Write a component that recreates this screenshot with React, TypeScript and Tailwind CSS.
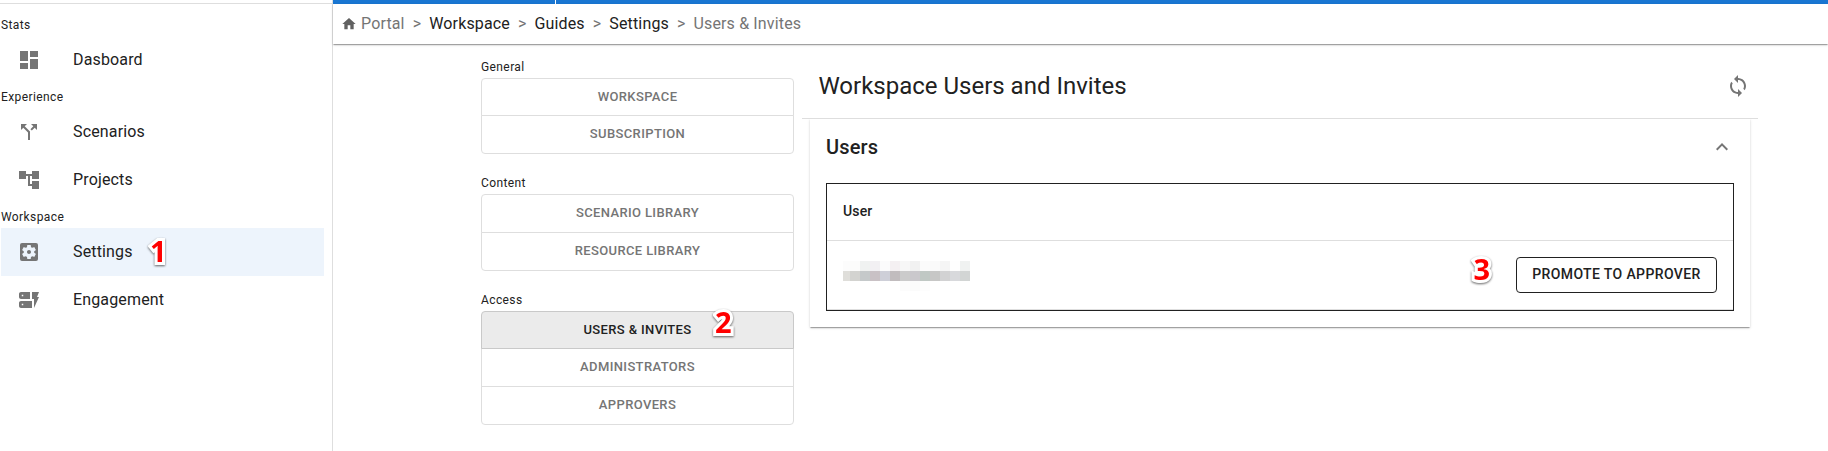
import type { ReactNode } from "react";
import {
  MdDashboard,
  MdCallSplit,
  MdAccountTree,
  MdSettingsApplications,
  MdDynamicForm,
  MdHome,
  MdLoop,
  MdExpandLess,
} from "react-icons/md";

const elevation =
  "shadow-[0_2px_1px_-1px_rgba(0,0,0,0.2),0_1px_1px_0_rgba(0,0,0,0.14),0_1px_3px_0_rgba(0,0,0,0.12)]";

function Marker({ n, className }: { n: number; className: string }) {
  return (
    <span
      className={`absolute font-['Open_Sans',sans-serif] text-[29px] leading-[30px] font-bold text-[#ff0000] [paint-order:stroke_fill] [-webkit-text-stroke:6px_white] [stroke-linejoin:round] drop-shadow-[0_1px_1px_rgba(0,0,0,0.6)] ${className}`}
    >
      {n}
    </span>
  );
}

function NavCaption({ children }: { children: ReactNode }) {
  return (
    <div className="h-6 pl-px pt-[3px] text-[12px] leading-5 tracking-[0.4px]">{children}</div>
  );
}

function NavItem({
  icon,
  label,
  active = false,
  children,
}: {
  icon: ReactNode;
  label: string;
  active?: boolean;
  children?: ReactNode;
}) {
  return (
    <div
      className={`relative ml-px flex h-12 w-[323px] items-center pl-4 ${active ? "bg-[#edf4fc]" : ""}`}
    >
      <span className="w-14 text-2xl text-[#757575]">{icon}</span>
      <span className="text-base tracking-[0.15px]">{label}</span>
      {children}
    </div>
  );
}

function ToggleGroup({
  title,
  items,
  selected,
  children,
}: {
  title: string;
  items: string[];
  selected?: string;
  children?: ReactNode;
}) {
  return (
    <div className="relative mb-[20.1px]">
      <div className="h-5 text-[12px] leading-[18px] tracking-[0.4px]">{title}</div>
      <div className="flex flex-col">
        {items.map((item) => (
          <div
            key={item}
            className={`-mt-px flex h-[38.7px] items-center justify-center border pb-[1.4px] text-[13px] font-medium tracking-[0.37px] uppercase first:mt-0 first:rounded-t last:rounded-b ${
              item === selected
                ? "relative border-[#c9c9c9] bg-[#ebebeb] text-[#212121]"
                : "border-[#dedede] text-[#757575]"
            }`}
          >
            {item}
          </div>
        ))}
      </div>
      {children}
    </div>
  );
}

const mosaicTop = ["bg-[#fcfcfc]", "bg-[#fcfcfb]", "bg-[#f0f2f1]", "bg-[#f2f0f3]", "bg-[#fbfbfc]", "bg-[#f4f0f2]", "bg-[#f7f7f7]", "bg-[#f1f1f1]", "bg-[#fbfbfb]", "bg-[#fafafa]", "bg-[#f5f5f5]", "bg-[#fefefe]", "bg-[#f0f2f1]"];
const mosaicMid = ["bg-[#dfdeda]", "bg-[#d3d3d0]", "bg-[#c5c9ca]", "bg-[#c9c1c5]", "bg-[#cecfd8]", "bg-[#c1bcbe]", "bg-[#cbcbcb]", "bg-[#cac8cc]", "bg-[#c0c8c4]", "bg-[#c7c7c6]", "bg-[#d2d2d3]", "bg-[#d8d9dc]", "bg-[#d2d5d4]"];
const mosaicLow = ["", "", "", "", "", "", "bg-[#fcfcfc]", "bg-[#fbfbfb]", "bg-[#fdfdfd]", "", "", "", ""];

function RedactedName() {
  return (
    <div className="-mb-[2px] w-[127px]">
      {[mosaicTop, mosaicMid, mosaicLow].map((row, r) => (
        <div key={r} className="flex h-2.5">
          {row.map((c, i) => (
            <span key={i} className={`${i === 0 ? "w-[7px]" : "w-2.5"} ${c}`} />
          ))}
        </div>
      ))}
    </div>
  );
}

function Sep() {
  return <span className="mx-2 text-[#757575]">&gt;</span>;
}

export default function App() {
  return (
    <div className="flex h-[451px] w-[1828px] overflow-hidden bg-white font-[Roboto,sans-serif] text-[#212121]">
      <aside className="w-[333px] shrink-0 border-r border-[#dedede]">
        <div className="h-1 border-b border-[#dedede]" />
        <nav className="pt-2">
          <NavCaption>Stats</NavCaption>
          <NavItem icon={<MdDashboard />} label="Dasboard" />
          <NavCaption>Experience</NavCaption>
          <NavItem icon={<MdCallSplit />} label="Scenarios" />
          <NavItem icon={<MdAccountTree />} label="Projects" />
          <NavCaption>Workspace</NavCaption>
          <NavItem icon={<MdSettingsApplications />} label="Settings" active>
            <Marker n={1} className="left-[149px] top-[8px]" />
          </NavItem>
          <NavItem icon={<MdDynamicForm />} label="Engagement" />
        </nav>
      </aside>

      <main className="min-w-0 flex-1">
        <div className="flex h-1 bg-[#1976d2]">
          <span className="ml-[222px] w-px bg-white" />
        </div>
        <div
          className={`flex h-10 items-center pl-[8px] text-base tracking-[0.15px] ${elevation}`}
        >
          <MdHome className="mr-1 text-base text-[#616161]" />
          <span className="text-[#757575]">Portal</span>
          <Sep />
          <span>Workspace</span>
          <Sep />
          <span>Guides</span>
          <Sep />
          <span>Settings</span>
          <Sep />
          <span className="text-[#757575]">Users &amp; Invites</span>
        </div>

        <div className="flex pl-[148px]">
          <div className="w-[313px] shrink-0 pt-[13.7px]">
            <ToggleGroup title="General" items={["Workspace", "Subscription"]} />
            <ToggleGroup title="Content" items={["Scenario Library", "Resource Library"]} />
            <ToggleGroup
              title="Access"
              items={["Users & Invites", "Administrators", "Approvers"]}
              selected="Users & Invites"
            >
              <Marker n={2} className="left-[234px] top-[16px]" />
            </ToggleGroup>
          </div>

          <section className="ml-2 w-[956px]">
            <div className="flex h-[75px] items-center justify-between border-b border-[#dedede] pt-[10px] pr-2 pl-[16.4px]">
              <h1 className="text-2xl">Workspace Users and Invites</h1>
              <MdLoop className="text-2xl text-[#757575]" />
            </div>
            <div className={`mx-2 h-[208px] px-4 [clip-path:inset(0_-4px_-5px_-4px)] ${elevation}`}>
              <div className="flex h-16 items-center justify-between pb-2">
                <h2 className="text-xl leading-8 font-medium tracking-[0.15px]">Users</h2>
                <MdExpandLess className="text-2xl text-[#757575]" />
              </div>
              <div className="h-[128px] border border-[#212121]">
                <div className="flex h-[57px] items-center border-b border-[#dedede] pb-[2px] pl-4 text-sm font-medium tracking-[0.15px]">
                  User
                </div>
                <div className="relative flex h-[69px] items-center justify-between border-b border-[#dedede] pr-4 pl-4">
                  <RedactedName />
                  <Marker n={3} className="right-[243px] top-[13px]" />
                  <button className="h-9 w-[201px] rounded border border-[#212121] pb-[2px] text-sm font-medium tracking-[0.38px] uppercase">
                    Promote to Approver
                  </button>
                </div>
              </div>
            </div>
          </section>
        </div>
      </main>
    </div>
  );
}
